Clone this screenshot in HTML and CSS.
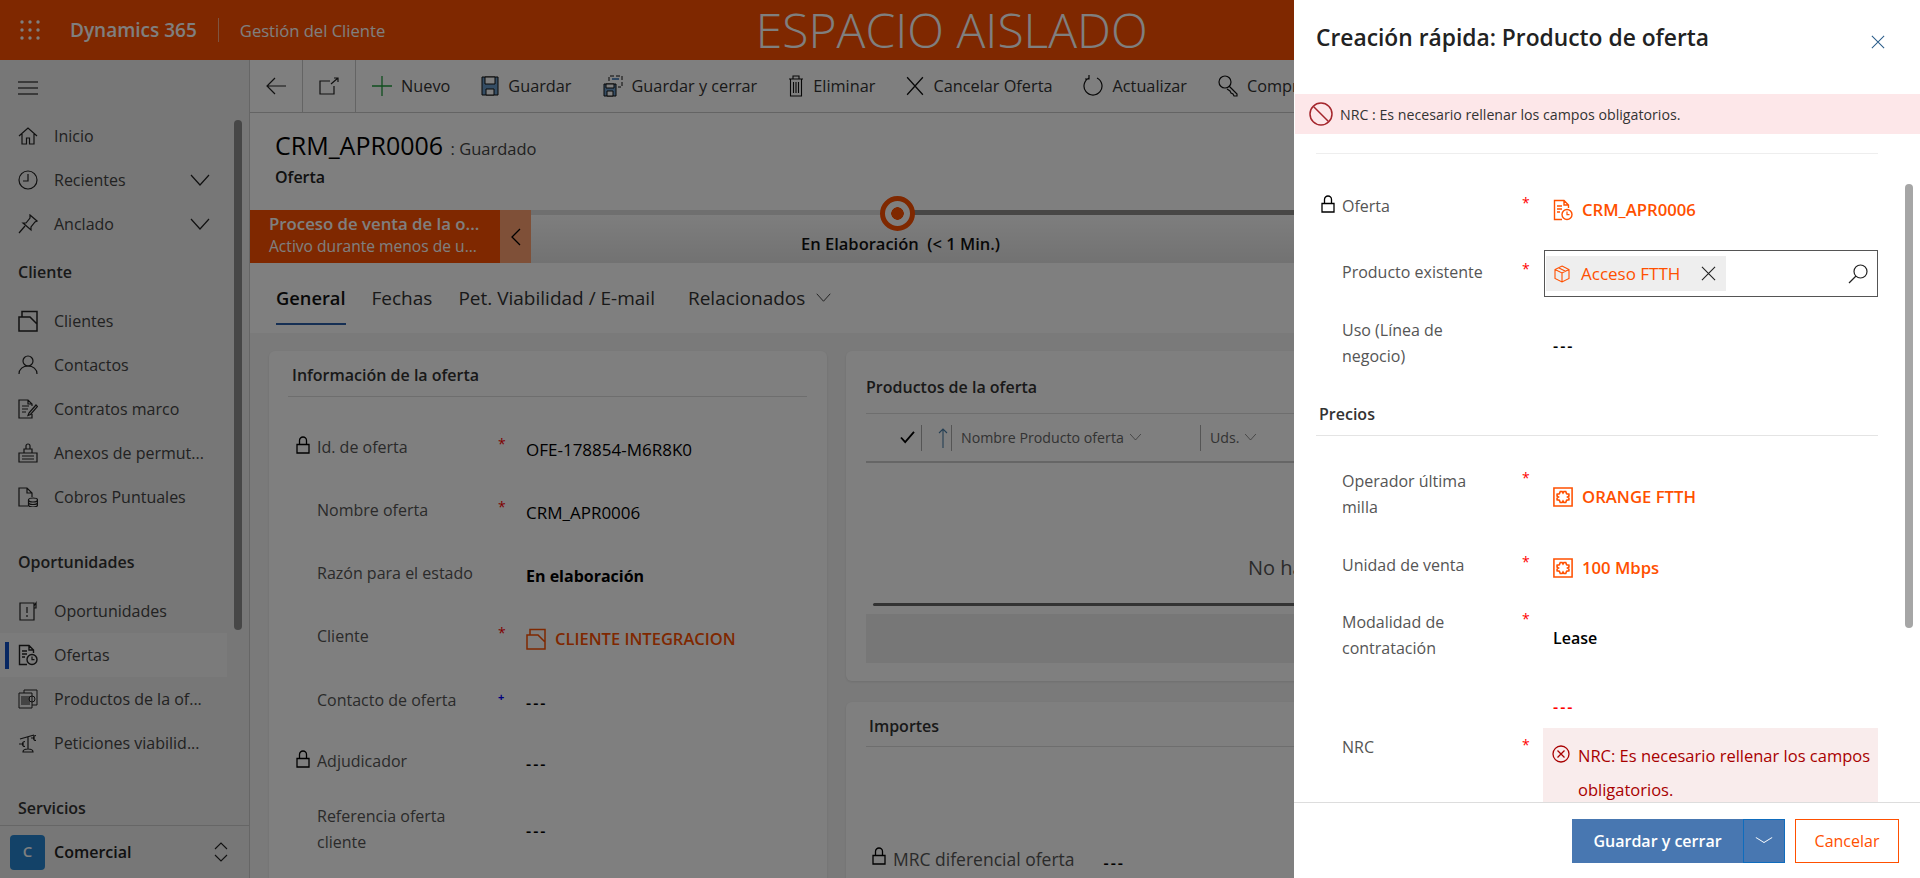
FILE: index.html
```html
<!DOCTYPE html>
<html lang="es">
<head>
    <meta charset="UTF-8">
    <meta name="viewport" content="width=device-width, initial-scale=1.0">
    <title>CRM_APR0006 - Dynamics 365</title>
    <link rel="stylesheet" href="styles.css">
</head>
<body>
    <svg class="sprites" aria-hidden="true">
        <symbol id="i-lock" viewBox="0 0 14 18"><path d="M1 8.500h12v8.500H1zM3.500 8.500V4.500a3.500 3.500 0 0 1 7 0v4" fill="none" stroke="currentColor" stroke-width="1.300"/></symbol>
        <symbol id="i-chevron" viewBox="0 0 20 20"><path d="M1 5l9 10 9-10" fill="none" stroke="currentColor" stroke-width="1.200"/></symbol>
        <symbol id="i-close" viewBox="0 0 16 16"><path d="M1 1l14 14M15 1L1 15" fill="none" stroke="currentColor" stroke-width="1.200"/></symbol>
        <symbol id="i-account" viewBox="0 0 20 22"><path d="M1 7h11l7 7v7H1zM4 7V1.500h15V14" fill="none" stroke="currentColor" stroke-width="1.500"/></symbol>
        <symbol id="i-offer" viewBox="0 0 20 22"><path d="M9 20.500H1.500v-19H11l4.500 4.500v3M11 1.500V6h4.500M4 7h5M4 10h5M4 13h3" fill="none" stroke="currentColor" stroke-width="1.400"/><circle cx="14" cy="15.500" r="5" fill="none" stroke="currentColor" stroke-width="1.400"/><path d="M14 12.500v3.200h2.500" fill="none" stroke="currentColor" stroke-width="1.200"/></symbol>
        <symbol id="i-unit" viewBox="0 0 22 22"><path d="M1 1h20v20H1z" fill="none" stroke="currentColor" stroke-width="1.700"/><path d="M8 5h2l1 1.500L12 5h2l1 2.500 2.500.5v2L16 11l1.500 1v2l-2.500.5-1 2.500h-2l-1-1.500-1 1.500H8l-1-2.500-2.500-.5v-2L6 11 4.500 10V8L7 7.500z" fill="none" stroke="currentColor" stroke-width="1.800"/></symbol>
    </svg>

    <header class="topbar">
        <svg class="waffle" viewBox="0 0 20 20" width="20" height="20"><g fill="currentColor"><circle cx="2" cy="2" r="1.700"/><circle cx="10" cy="2" r="1.700"/><circle cx="18" cy="2" r="1.700"/><circle cx="2" cy="10" r="1.700"/><circle cx="10" cy="10" r="1.700"/><circle cx="18" cy="10" r="1.700"/><circle cx="2" cy="18" r="1.700"/><circle cx="10" cy="18" r="1.700"/><circle cx="18" cy="18" r="1.700"/></g></svg>
        <span class="brand">Dynamics 365</span>
        <span class="app-name">Gestión del Cliente</span>
        <span class="env-name">ESPACIO AISLADO</span>
    </header>

    <div class="shell">
        <nav class="sitemap">
            <div class="nav-list">
                <div class="hamburger"><svg viewBox="0 0 20 14" width="20" height="14"><path d="M0 1h20M0 7h20M0 13h20" stroke="currentColor" stroke-width="1.200"/></svg></div>
                <a class="nav-item"><svg viewBox="0 0 20 20" width="20" height="20"><path d="M1 10l9-8 9 8M4 8v10h4.500v-6h3v6H16V8" fill="none" stroke="currentColor" stroke-width="1.200"/></svg>Inicio</a>
                <a class="nav-item"><svg viewBox="0 0 20 20" width="20" height="20"><circle cx="10" cy="10" r="9" fill="none" stroke="currentColor" stroke-width="1.200"/><path d="M10 4v7H5" fill="none" stroke="currentColor" stroke-width="1.200"/></svg>Recientes<svg class="nav-chevron" width="20" height="20"><use href="#i-chevron"/></svg></a>
                <a class="nav-item"><svg viewBox="0 0 20 20" width="20" height="20"><path d="M12 1l7 6-2 1-4 5 0 3-8-7 3 0 4-5zM7 12l-6 7" fill="none" stroke="currentColor" stroke-width="1.200"/></svg>Anclado<svg class="nav-chevron" width="20" height="20"><use href="#i-chevron"/></svg></a>

                <h3 class="nav-group">Cliente</h3>
                <a class="nav-item"><svg width="20" height="22"><use href="#i-account"/></svg>Clientes</a>
                <a class="nav-item"><svg viewBox="0 0 20 20" width="20" height="20"><circle cx="10" cy="6" r="5" fill="none" stroke="currentColor" stroke-width="1.200"/><path d="M1 19c0-5 4-8 9-8s9 3 9 8" fill="none" stroke="currentColor" stroke-width="1.200"/></svg>Contactos</a>
                <a class="nav-item"><svg viewBox="0 0 20 20" width="20" height="20"><path d="M14 7V5l-4-4H1v18h13v-4M10 1v4h4M4 7h7M4 10h6M4 13h4M11 14l7-8 1.500 1.500-7 8-2.500 1z" fill="none" stroke="currentColor" stroke-width="1.200"/></svg>Contratos marco</a>
                <a class="nav-item"><svg viewBox="0 0 20 20" width="20" height="20"><path d="M1 10h18v9H1zM6 10V6h8v4M8 6V3a2 2 0 0 1 4 0v3M4 13h12M4 16h12" fill="none" stroke="currentColor" stroke-width="1.200"/></svg>Anexos de permut...</a>
                <a class="nav-item"><svg viewBox="0 0 20 20" width="20" height="20"><path d="M10 19H1V1h8l5 5v4M9 1v5h5" fill="none" stroke="currentColor" stroke-width="1.200"/><ellipse cx="15" cy="13" rx="4.500" ry="2" fill="none" stroke="currentColor" stroke-width="1.200"/><path d="M10.500 13v5c0 1 2 2 4.500 2s4.500-1 4.500-2v-5M10.500 15.500c0 1 2 2 4.500 2s4.500-1 4.500-2" fill="none" stroke="currentColor" stroke-width="1.200"/></svg>Cobros Puntuales</a>

                <h3 class="nav-group nav-group-spaced">Oportunidades</h3>
                <a class="nav-item"><svg viewBox="0 0 20 20" width="20" height="20"><path d="M2 2h14v17H2zM16 5l2-3v5h-2M9 6v6M9 14v2" fill="none" stroke="currentColor" stroke-width="1.200"/></svg>Oportunidades</a>
                <a class="nav-item nav-item-active"><svg width="20" height="22"><use href="#i-offer"/></svg>Ofertas</a>
                <a class="nav-item"><svg viewBox="0 0 20 20" width="20" height="20"><path d="M1 4h13v15H1zM6 4V1h13v15h-5" fill="none" stroke="currentColor" stroke-width="1"/><path d="M3 7h9v9H3z" fill="currentColor" opacity=".5"/><circle cx="14" cy="10" r="3" fill="none" stroke="currentColor"/></svg>Productos de la of...</a>
                <a class="nav-item"><svg viewBox="0 0 20 20" width="20" height="20"><path d="M2 6l14-4M10 4v12M5 19c0-2 2-3 5-3s5 1 5 3zM7 8.500a2.500 2.500 0 1 0 0 5M1 11h5M18 2.500a2.300 2.300 0 1 0 0 5M13 5h4" fill="none" stroke="currentColor" stroke-width="1.200"/></svg>Peticiones viabilid...</a>

                <h3 class="nav-group nav-group-last">Servicios</h3>
            </div>
            <div class="nav-scroll"></div>
            <div class="area-switch">
                <span class="area-tile">C</span>
                <span class="area-name">Comercial</span>
                <svg class="area-arrows" viewBox="0 0 14 20" width="14" height="20"><path d="M1 7l6-6 6 6M1 13l6 6 6-6" fill="none" stroke="currentColor" stroke-width="1.100"/></svg>
            </div>
        </nav>

        <main class="record">
            <div class="cmdbar">
                <span class="cmd-cell"><svg viewBox="0 0 20 18" width="20" height="18"><path d="M9 1L1 9l8 8M1 9h19" fill="none" stroke="currentColor" stroke-width="1.200"/></svg></span>
                <span class="cmd-cell"><svg viewBox="0 0 20 18" width="20" height="18"><path d="M11 4H1v13h14V9M12 7l7-6M15 1h4v4" fill="none" stroke="currentColor" stroke-width="1.200"/></svg></span>
                <a class="cmd cmd-new"><svg viewBox="0 0 20 20" width="20" height="20"><path d="M10 0v20M0 10h20" stroke="#1f9d3d" stroke-width="1.300"/></svg>Nuevo</a>
                <a class="cmd"><svg viewBox="0 0 18 20" width="18" height="20"><path d="M1 1h16v18H1z" fill="#6a9bc8" stroke="#111" stroke-width="1"/><path d="M4 1h10v7H4zM5 13h8v6H5z" fill="#fff" stroke="#111"/></svg>Guardar</a>
                <a class="cmd"><svg viewBox="0 0 20 22" width="20" height="22"><path d="M1 9h12v12H1z" fill="#6a9bc8" stroke="#111"/><path d="M3 9h8v4H3zM4 16h6v5H4z" fill="#fff" stroke="#111"/><path d="M6 6V1h13v11h-4" fill="none" stroke="#111" stroke-dasharray="4 2"/><path d="M9 4h7" fill="none" stroke="#2b6cb0" stroke-width="1.500"/></svg>Guardar y cerrar</a>
                <a class="cmd"><svg viewBox="0 0 16 22" width="16" height="22"><path d="M1 4h14M5 4V1h6v3M2.500 4v17h11V4M5.500 7v11M8 7v11M10.500 7v11" fill="none" stroke="currentColor" stroke-width="1.100"/></svg>Eliminar</a>
                <a class="cmd"><svg width="18" height="20" viewBox="0 0 16 16" preserveAspectRatio="none"><use href="#i-close"/></svg>Cancelar Oferta</a>
                <a class="cmd"><svg viewBox="0 0 20 22" width="20" height="22"><path d="M6 3a9 9 0 1 0 8 0M6 0v4H2" fill="none" stroke="currentColor" stroke-width="1.200"/></svg>Actualizar</a>
                <a class="cmd"><svg viewBox="0 0 20 22" width="20" height="22"><circle cx="7" cy="7" r="6" fill="none" stroke="currentColor" stroke-width="1.200"/><path d="M11 11l8 8v2h-3l-1-2-2-1-1-2-3-2" fill="none" stroke="currentColor" stroke-width="1.200"/></svg>Comprobar</a>
            </div>

            <div class="record-head">
                <h1 class="record-title">CRM_APR0006 <small>: Guardado</small></h1>
                <div class="record-type">Oferta</div>
            </div>

            <div class="bpf">
                <div class="bpf-flyout">
                    <strong>Proceso de venta de la o...</strong>
                    <span>Activo durante menos de u...</span>
                </div>
                <div class="bpf-collapse"><svg viewBox="0 0 10 18" width="10" height="18"><path d="M9 1L1 9l8 8" fill="none" stroke="currentColor" stroke-width="1.300"/></svg></div>
                <div class="bpf-track">
                    <div class="bpf-lines"><span class="bpf-line-done"></span><span class="bpf-line-next"></span></div>
                    <div class="bpf-stage">En Elaboración&nbsp; (&lt; 1 Min.)</div>
                    <span class="bpf-marker"></span>
                </div>
            </div>

            <div class="tabs">
                <a class="tab tab-active">General</a>
                <a class="tab">Fechas</a>
                <a class="tab">Pet. Viabilidad / E-mail</a>
                <a class="tab tab-more">Relacionados <svg width="15" height="15"><use href="#i-chevron"/></svg></a>
            </div>

            <div class="sections">
                <section class="card card-info">
                    <h2 class="card-title">Información de la oferta</h2>
                    <div class="fields">
                        <div class="field"><svg class="lock" width="14" height="18"><use href="#i-lock"/></svg><span class="label">Id. de oferta</span><span class="req">*</span><span class="value">OFE-178854-M6R8K0</span></div>
                        <div class="field"><span class="label">Nombre oferta</span><span class="req">*</span><span class="value">CRM_APR0006</span></div>
                        <div class="field"><span class="label">Razón para el estado</span><span class="req"></span><span class="value value-bold">En elaboración</span></div>
                        <div class="field field-client"><span class="label">Cliente</span><span class="req">*</span><span class="value value-link"><svg width="20" height="22"><use href="#i-account"/></svg>CLIENTE INTEGRACION</span></div>
                        <div class="field field-short"><span class="label">Contacto de oferta</span><span class="req req-blue">+</span><span class="value dash">---</span></div>
                        <div class="field field-shorter"><svg class="lock" width="14" height="18"><use href="#i-lock"/></svg><span class="label">Adjudicador</span><span class="req"></span><span class="value dash">---</span></div>
                        <div class="field"><span class="label">Referencia oferta<br>cliente</span><span class="req"></span><span class="value value-mid dash">---</span></div>
                    </div>
                </section>

                <div class="side-stack">
                    <section class="card card-products">
                        <h2 class="card-title card-title-products">Productos de la oferta</h2>
                        <div class="grid-head">
                            <span class="grid-check"><svg viewBox="0 0 16 14" width="15" height="13"><path d="M1 7l4.500 5L15 1" fill="none" stroke="#000" stroke-width="2"/></svg></span>
                            <span class="grid-sort"><svg viewBox="0 0 10 20" width="10" height="20"><path d="M5 20V1M1 5l4-4 4 4" fill="none" stroke="#4a7ea8" stroke-width="1.100"/></svg></span>
                            <span class="grid-col grid-col-name">Nombre Producto oferta <svg width="15" height="12"><use href="#i-chevron"/></svg></span>
                            <span class="grid-col">Uds. <svg width="15" height="12"><use href="#i-chevron"/></svg></span>
                        </div>
                        <div class="grid-empty">No hay datos disponibles.</div>
                        <div class="grid-scroll"></div>
                        <div class="grid-foot"></div>
                    </section>
                    <section class="card card-amounts">
                        <h2 class="card-title card-title-amounts">Importes</h2>
                        <div class="amount-row"><svg class="lock" width="14" height="18"><use href="#i-lock"/></svg><span class="label">MRC diferencial oferta</span><span class="value dash">---</span></div>
                    </section>
                </div>
            </div>
        </main>
    </div>

    <div class="dim"></div>

    <aside class="quick-create">
        <div class="qc-head">
            <h2>Creación rápida: Producto de oferta</h2>
            <svg class="qc-close" width="14" height="14"><use href="#i-close"/></svg>
        </div>
        <div class="qc-banner">
            <svg viewBox="0 0 24 24" width="24" height="24"><circle cx="12" cy="12" r="11" fill="none" stroke="#a4262c" stroke-width="1.500"/><path d="M4.500 4.500l15 15" stroke="#a4262c" stroke-width="1.500"/></svg>
            NRC : Es necesario rellenar los campos obligatorios.
        </div>
        <div class="qc-body">
            <div class="qc-rule"></div>
            <div class="field qc-first"><svg class="lock" width="14" height="18"><use href="#i-lock"/></svg><span class="label">Oferta</span><span class="req">*</span><span class="value value-link"><svg width="20" height="22"><use href="#i-offer"/></svg>CRM_APR0006</span></div>
            <div class="field qc-lookup-row">
                <span class="label">Producto existente</span><span class="req">*</span>
                <div class="lookup">
                    <span class="lookup-tag">
                        <svg viewBox="0 0 16 18" width="16" height="18"><path d="M8 1l7 3.500v9L8 17l-7-3.500v-9zM1 4.500L8 8l7-3.500M8 8v9M4.500 2.800l7 3.500" fill="none" stroke="currentColor" stroke-width="1.100"/></svg>
                        Acceso FTTH
                        <svg class="lookup-x" width="15" height="15"><use href="#i-close"/></svg>
                    </span>
                    <svg class="lookup-search" viewBox="0 0 20 20" width="20" height="20"><circle cx="12.500" cy="7.500" r="6.500" fill="none" stroke="currentColor" stroke-width="1.200"/><path d="M8 12l-7 7" stroke="currentColor" stroke-width="1.200"/></svg>
                </div>
            </div>
            <div class="field qc-use-row"><span class="label">Uso (Línea de<br>negocio)</span><span class="req"></span><span class="value value-mid dash">---</span></div>
            <h3 class="qc-section">Precios</h3>
            <div class="field qc-operator-row"><span class="label">Operador última<br>milla</span><span class="req">*</span><span class="value value-link value-mid"><svg width="20" height="20"><use href="#i-unit"/></svg>ORANGE FTTH</span></div>
            <div class="field qc-unit-row"><span class="label">Unidad de venta</span><span class="req">*</span><span class="value value-link"><svg width="20" height="20"><use href="#i-unit"/></svg>100 Mbps</span></div>
            <div class="field qc-mode-row"><span class="label">Modalidad de<br>contratación</span><span class="req">*</span><span class="value value-mid value-semi">Lease</span></div>
            <div class="field qc-nrc-row">
                <span class="label">NRC</span><span class="req">*</span>
                <div class="nrc-value">
                    <div class="nrc-empty">---</div>
                    <div class="nrc-error">
                        <svg viewBox="0 0 18 18" width="18" height="18"><circle cx="9" cy="9" r="8" fill="none" stroke="#a80000" stroke-width="1.300"/><path d="M5.500 5.500l7 7M12.500 5.500l-7 7" stroke="#a80000" stroke-width="1.300"/></svg>
                        <span>NRC: Es necesario rellenar los campos<br>obligatorios.</span>
                    </div>
                </div>
            </div>
            <div class="qc-scroll"></div>
        </div>
        <div class="qc-foot">
            <button class="btn-save">Guardar y cerrar</button>
            <button class="btn-more"><svg width="18" height="10" viewBox="0 0 20 20" preserveAspectRatio="none"><use href="#i-chevron"/></svg></button>
            <button class="btn-cancel">Cancelar</button>
        </div>
    </aside>
</body>
</html>
```

FILE: styles.css
```css
* {
    box-sizing: border-box;
}
html, body {
    height: 100%;
    margin: 0;
    overflow: hidden;
}
body {
    font-family: "Open Sans", "Noto Sans", sans-serif;
    font-size: 15px;
    color: #222;
    background: #fff;
    position: relative;
}
.sprites {
    display: none;
}
h1, h2, h3 {
    margin: 0;
}

/* top bar */
.topbar {
    height: 60px;
    background: #ff5000;
    color: #fff;
    display: flex;
    align-items: center;
    padding-left: 20px;
}
.brand {
    margin-left: 30px;
    font-size: 19px;
    font-weight: 600;
    padding-right: 21px;
    border-right: 1px solid rgba(255, 255, 255, 0.5);
    line-height: 24px;
}
.app-name {
    margin-left: 21px;
    font-size: 16.600px;
    width: 146px;
    white-space: nowrap;
}
.env-name {
    margin-left: 370px;
    font-size: 48px;
    font-weight: 300;
    line-height: 60px;
    white-space: nowrap;
}

.shell {
    display: flex;
    height: 818px;
    padding-right: 626px;
}

/* left site map */
.sitemap {
    width: 250px;
    flex: none;
    background: #eee;
    border-right: 1px solid #ccc;
    display: flex;
    flex-direction: column;
    position: relative;
}
.nav-list {
    flex: 1;
    overflow: hidden;
}
.hamburger {
    height: 54px;
    padding: 19px 0 0 18px;
    color: #000;
}
.nav-item {
    height: 44px;
    display: flex;
    align-items: center;
    gap: 16px;
    padding-left: 18px;
    font-size: 16px;
    color: #444;
    white-space: nowrap;
    width: 227px;
    position: relative;
}
.nav-item svg {
    flex: none;
    color: #222;
}
.nav-chevron {
    margin-left: auto;
    margin-right: 17px;
}
.nav-item-active {
    background: #f7f7f7;
}
.nav-item-active::before {
    content: "";
    position: absolute;
    left: 5px;
    top: 9px;
    width: 4px;
    height: 27px;
    background: #0f4fc4;
}
.nav-group {
    height: 53px;
    padding: 14px 0 0 18px;
    font-size: 16px;
    line-height: 24px;
    font-weight: 600;
    color: #333;
}
.nav-group-spaced {
    height: 70px;
    padding-top: 31px;
}
.nav-group-last {
    padding-top: 31px;
    height: 60px;
}
.nav-scroll {
    position: absolute;
    left: 234px;
    top: 60px;
    width: 8px;
    height: 510px;
    border-radius: 4px;
    background: #8e8e8e;
}
.area-switch {
    height: 53px;
    flex: none;
    border-top: 1px solid #ccc;
    background: #eee;
    display: flex;
    align-items: center;
    padding-left: 10px;
}
.area-tile {
    width: 35px;
    height: 35px;
    border-radius: 4px;
    background: #2684d0;
    color: #fff;
    font-weight: 600;
    text-align: center;
    line-height: 33px;
}
.area-name {
    margin-left: 9px;
    font-size: 16px;
    font-weight: 600;
    color: #222;
}
.area-arrows {
    margin-left: auto;
    margin-right: 21px;
}

/* record */
.record {
    flex: 1;
    min-width: 0;
    background: #fff;
    display: flex;
    flex-direction: column;
    overflow: hidden;
}
.cmdbar {
    height: 53px;
    flex: none;
    display: flex;
    align-items: center;
    border-bottom: 1px solid #c8c8c8;
    font-size: 16.300px;
    white-space: nowrap;
    color: #222;
}
.cmd-cell {
    width: 53px;
    height: 52px;
    flex: none;
    display: flex;
    align-items: center;
    justify-content: center;
    border-right: 1px solid #c8c8c8;
    color: #222;
}
.cmd {
    display: flex;
    align-items: center;
    gap: 9px;
    margin-left: 31px;
    color: #333;
}
.cmd svg {
    flex: none;
    color: #111;
}
.cmd-new {
    margin-left: 16px;
}
.record-head {
    height: 97px;
    flex: none;
    padding: 16px 0 0 25px;
}
.record-title {
    font-size: 25px;
    font-weight: 400;
    line-height: 32px;
    color: #000;
}
.record-title small {
    font-size: 16.500px;
    color: #444;
    margin-left: 1px;
}
.record-type {
    font-size: 16px;
    font-weight: 600;
    line-height: 24px;
    color: #222;
}

/* process bar */
.bpf {
    height: 53px;
    flex: none;
    display: flex;
    position: relative;
    color: #fff;
}
.bpf-flyout {
    width: 250px;
    flex: none;
    background: #ff5000;
    padding: 2px 0 0 19px;
    line-height: 23px;
    white-space: nowrap;
    overflow: hidden;
}
.bpf-flyout strong {
    display: block;
    font-size: 16.800px;
    font-weight: 600;
}
.bpf-flyout span {
    display: block;
    font-size: 15.600px;
}
.bpf-collapse {
    width: 31px;
    flex: none;
    background: #ffa070;
    color: #000;
    display: flex;
    align-items: center;
    justify-content: center;
}
.bpf-track {
    flex: 1;
    position: relative;
    background: linear-gradient(#fff, #e4e4e4);
}
.bpf-lines {
    display: flex;
    height: 5px;
}
.bpf-line-done {
    width: 368px;
    background: #dedede;
}
.bpf-line-next {
    flex: 1;
    background: #908e8c;
}
.bpf-stage {
    margin: 17px 0 0 270px;
    font-size: 16.500px;
    line-height: 24px;
    font-weight: 600;
    color: #111;
    white-space: nowrap;
}
.bpf-marker {
    position: absolute;
    left: 349px;
    top: -14px;
    width: 35px;
    height: 35px;
    border-radius: 50%;
    border: 5px solid #ff5000;
    background: radial-gradient(circle, #ff5000 0 6px, #fff 6.500px);
}

/* tabs */
.tabs {
    height: 70px;
    flex: none;
    display: flex;
    padding: 21px 0 0 26px;
    gap: 26px;
    font-size: 19px;
    color: #333;
    white-space: nowrap;
}
.tab {
    height: 41px;
    line-height: 26px;
    padding-top: 1px;
}
.tab svg {
    margin-left: 6px;
}
.tab-active {
    font-size: 18.300px;
    font-weight: 600;
    color: #111;
    border-bottom: 2px solid #2b5fa8;
}
.tab-more {
    margin-left: 7px;
}

/* form sections */
.sections {
    flex: 1;
    background: #f5f5f5;
    display: grid;
    grid-template-columns: 558px 880px;
    gap: 19px;
    padding: 18px 0 0 19px;
}
.card {
    background: #fff;
    border-radius: 6px;
    box-shadow: 0 1px 3px rgba(0, 0, 0, 0.1);
    position: relative;
}
.card-info {
    padding: 0 20px 0 19px;
    height: 540px;
}
.card-title {
    font-size: 16px;
    font-weight: 600;
    line-height: 24px;
    color: #333;
    padding: 12px 0 9px 4px;
    border-bottom: 1px solid #ddd;
}
.fields {
    padding: 28px 0 0 8px;
}
.field {
    display: grid;
    grid-template-columns: 21px 173px 36px 1fr;
    min-height: 63px;
    align-items: start;
}
.field-client {
    min-height: 64px;
}
.field-short {
    min-height: 61px;
}
.field-shorter {
    min-height: 55px;
}
.lock {
    grid-column: 1;
    margin-top: 11px;
    color: #000;
}
.label {
    grid-column: 2;
    padding-top: 9px;
    font-size: 16px;
    line-height: 26px;
    color: #555;
}
.req {
    grid-column: 3;
    padding: 6px 0 0 8px;
    font-size: 14px;
    line-height: 26px;
    color: #ff0000;
}
.req-blue {
    color: #0000ff;
    font-size: 11px;
    font-weight: 700;
}
.value {
    grid-column: 4;
    padding-top: 13px;
    font-size: 16px;
    line-height: 26px;
    font-weight: 500;
    color: #000;
    white-space: nowrap;
}
.fields .value {
    padding-top: 12px;
    font-size: 17px;
}
.fields .value-bold {
    font-size: 16px;
    font-weight: 700;
}
.fields .value-mid {
    padding-top: 24px;
}
.value-semi {
    font-weight: 600;
}
.value-mid {
    padding-top: 25px;
}
.value-link {
    color: #ff5000;
    font-weight: 600;
    font-size: 16.700px;
    display: flex;
    align-items: center;
    gap: 9px;
}
.fields .value-link {
    font-size: 16.500px;
}
.value-link svg {
    flex: none;
}
.dash,
.fields .dash {
    font-size: 16px;
    font-weight: 600;
    letter-spacing: 2px;
}

.side-stack {
    display: flex;
    flex-direction: column;
    gap: 21px;
}
.card-products {
    height: 330px;
    padding: 0 20px;
    flex: none;
}
.card-title-products {
    padding: 24px 0 14px 0;
}
.grid-head {
    height: 49px;
    display: flex;
    align-items: center;
    border-bottom: 2px solid #ccc;
    font-size: 14.200px;
    color: #666;
    white-space: nowrap;
}
.grid-check {
    width: 56px;
    height: 26px;
    display: flex;
    align-items: center;
    justify-content: flex-end;
    padding-right: 6px;
    border-right: 1px solid #aaa;
}
.grid-sort {
    width: 30px;
    height: 26px;
    display: flex;
    align-items: center;
    justify-content: flex-end;
    padding-right: 3px;
    border-right: 1px solid #aaa;
}
.grid-col {
    padding-left: 9px;
    height: 26px;
    line-height: 26px;
}
.grid-col-name {
    width: 249px;
    border-right: 1px solid #aaa;
}
.grid-empty {
    margin: 91px 0 0 382px;
    font-size: 20px;
    line-height: 28px;
    color: #555;
    white-space: nowrap;
}
.grid-scroll {
    height: 3px;
    margin: 21px 0 0 7px;
    background: #666;
    border-radius: 2px;
}
.grid-foot {
    height: 49px;
    margin-top: 8px;
    background: #eee;
}
.card-amounts {
    flex: 1;
    padding: 0 20px;
}
.card-title-amounts {
    padding: 12px 0 8px 3px;
}
.amount-row {
    display: flex;
    align-items: flex-start;
    margin-top: 90px;
    padding-left: 6px;
}
.amount-row .lock {
    margin-top: 10px;
}
.amount-row .label {
    margin-left: 7px;
    font-size: 17.500px;
}
.amount-row .value {
    margin-left: 29px;
}

/* overlay behind the quick create panel */
.dim {
    position: absolute;
    inset: 0;
    background: rgba(0, 0, 0, 0.5);
}

/* quick create */
.quick-create {
    position: absolute;
    top: 0;
    right: 0;
    bottom: 0;
    width: 626px;
    background: #fff;
    display: flex;
    flex-direction: column;
}
.qc-head {
    height: 94px;
    flex: none;
    padding: 19px 0 0 22px;
    position: relative;
}
.qc-head h2 {
    font-size: 22.800px;
    font-weight: 600;
    line-height: 38px;
    color: #222;
}
.qc-close {
    position: absolute;
    right: 35px;
    top: 35px;
    color: #2b5d8a;
}
.qc-banner {
    height: 40px;
    flex: none;
    background: #fde7e9;
    display: flex;
    align-items: center;
    gap: 7px;
    margin-left: 1px;
    padding-left: 14px;
    font-size: 14.200px;
    color: #333;
}
.qc-body {
    flex: 1;
    min-height: 0;
    overflow: hidden;
    padding: 19px 42px 0 27px;
    position: relative;
}
.qc-rule {
    height: 1px;
    margin-left: -5px;
    background: #eee;
}
.qc-body .field {
    grid-template-columns: 21px 175px 36px 1fr;
}
.qc-body .req {
    padding-left: 5px;
}
.qc-first {
    margin-top: 30px;
    min-height: 66px;
}
.qc-body .qc-lookup-row {
    min-height: 58px;
}
.lookup {
    grid-column: 4;
    margin-left: -9px;
    height: 47px;
    border: 1px solid #555;
    display: flex;
    align-items: center;
    justify-content: space-between;
    padding: 0 9px 0 1px;
}
.lookup-tag {
    width: 180px;
    height: 35px;
    background: #eee;
    color: #ff5000;
    font-size: 17px;
    display: flex;
    align-items: center;
    gap: 11px;
    padding-left: 8px;
    white-space: nowrap;
}
.lookup-x {
    color: #222;
    margin-left: auto;
    margin-right: 10px;
}
.lookup-search {
    color: #222;
}
.qc-use-row {
    min-height: 77px;
}
.qc-section {
    height: 51px;
    padding-top: 17px;
    font-size: 16px;
    font-weight: 600;
    line-height: 24px;
    color: #333;
    border-bottom: 1px solid #e4e4e4;
    margin-left: -5px;
    padding-left: 3px;
    margin-bottom: 23px;
}
.qc-body .qc-operator-row {
    min-height: 84px;
}
.qc-body .qc-unit-row {
    min-height: 57px;
}
.qc-unit-row .value {
    padding-top: 12px;
}
.qc-body .qc-mode-row {
    min-height: 90px;
}
.qc-nrc-row .label {
    padding-top: 44px;
}
.qc-body .qc-nrc-row .req {
    padding-top: 42px;
}
.nrc-value {
    grid-column: 4;
    margin-left: -10px;
}
.nrc-empty {
    padding: 4px 0 0 10px;
    font-size: 16px;
    line-height: 26px;
    font-weight: 600;
    letter-spacing: 2px;
    color: #ff0000;
}
.nrc-error {
    margin-top: 8px;
    padding: 11px 0 0 9px;
    display: flex;
    gap: 8px;
    background: #f9ecec;
    color: #a80000;
    font-size: 16.500px;
    line-height: 34px;
    font-weight: 500;
    white-space: nowrap;
}
.nrc-error svg {
    flex: none;
    margin-top: 6px;
}
.qc-scroll {
    position: absolute;
    top: 50px;
    right: 7px;
    width: 8px;
    height: 444px;
    border-radius: 4px;
    background: #a6a6a6;
}
.qc-foot {
    height: 76px;
    flex: none;
    border-top: 1px solid #ddd;
    display: flex;
    align-items: flex-start;
    padding: 16px 21px 0 0;
    justify-content: flex-end;
}
.qc-foot button {
    height: 44px;
    font-family: inherit;
    font-size: 16px;
    border-radius: 0;
}
.btn-save {
    width: 171px;
    background: #4877b1;
    border: 1px solid #4877b1;
    color: #fff;
    font-weight: 600;
}
.btn-more {
    width: 42px;
    background: #4877b1;
    border: 1px solid #0f6cbd;
    color: #fff;
    padding: 0 0 4px;
}
.btn-cancel {
    width: 104px;
    margin-left: 10px;
    background: #fff;
    border: 1px solid #ff5000;
    color: #ff5000;
}
```
